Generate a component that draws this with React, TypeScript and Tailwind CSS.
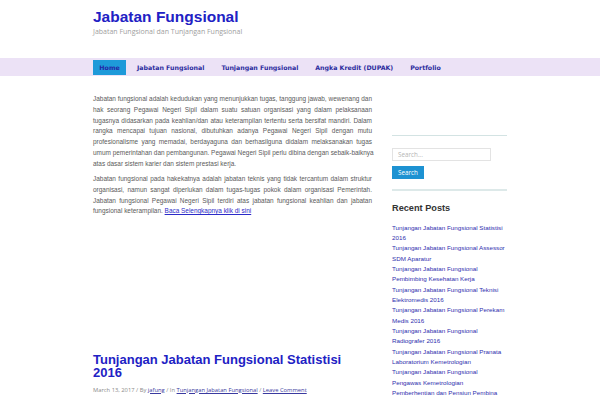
import React from 'react';

const navItems = ['Home', 'Jabatan Fungsional', 'Tunjangan Fungsional', 'Angka Kredit (DUPAK)', 'Portfolio'];

const para1 = [
  'Jabatan fungsional adalah kedudukan yang menunjukkan tugas, tanggung jawab, wewenang dan',
  'hak seorang Pegawai Negeri Sipil dalam suatu satuan organisasi yang dalam pelaksanaan',
  'tugasnya didasarkan pada keahlian/dan atau keterampilan tertentu serta bersifat mandiri. Dalam',
  'rangka mencapai tujuan nasional, dibutuhkan adanya Pegawai Negeri Sipil dengan mutu',
  'profesionalisme yang memadai, berdayaguna dan berhasilguna didalam melaksanakan tugas',
  'umum pemerintahan dan pembangunan. Pegawai Negeri Sipil perlu dibina dengan sebaik-baiknya',
];

const para2 = [
  'Jabatan fungsional pada hakekatnya adalah jabatan teknis yang tidak tercantum dalam struktur',
  'organisasi, namun sangat diperlukan dalam tugas-tugas pokok dalam organisasi Pemerintah.',
  'Jabatan fungsional Pegawai Negeri Sipil terdiri atas jabatan fungsional keahlian dan jabatan',
];

const recentPosts = [
  'Tunjangan Jabatan Fungsional Statistisi 2016',
  'Tunjangan Jabatan Fungsional Assessor SDM Aparatur',
  'Tunjangan Jabatan Fungsional Pembimbing Kesehatan Kerja',
  'Tunjangan Jabatan Fungsional Teknisi Elektromedis 2016',
  'Tunjangan Jabatan Fungsional Perekam Medis 2016',
  'Tunjangan Jabatan Fungsional Radiografer 2016',
  'Tunjangan Jabatan Fungsional Pranata Laboratorium Kemetrologian',
  'Tunjangan Jabatan Fungsional Pengawas Kemetrologian',
  'Pemberhentian dan Pensiun Pembina',
];

// full lines are justified edge to edge, like the source
const Line = ({ children }: { children: React.ReactNode }) => (
  <span className="block whitespace-nowrap text-justify [text-align-last:justify]">{children}</span>
);

export default function App() {
  return (
    <div className="w-[600px] h-[400px] overflow-hidden bg-white font-['Liberation_Sans',Arial,sans-serif]">
      {/* Header */}
      <div className="w-[414px] mx-auto pt-[8px] h-[58px]">
        <h1 className="text-[15.5px] leading-[18px] font-bold text-[#2121c4]">Jabatan Fungsional</h1>
        <p className="mt-[1px] text-[7px] leading-[10px] text-[#a0a0a0] font-['Open_Sans',sans-serif]">
          Jabatan Fungsional dan Tunjangan Fungsional
        </p>
      </div>

      {/* Nav */}
      <div className="bg-[#ece2f6] h-[18px] pt-[2px]">
        <ul className="w-[414px] mx-auto flex gap-[5px]">
          {navItems.map((item, i) => (
            <li
              key={item}
              className={`h-[15px] px-[6px] flex items-center text-[6.25px] font-bold font-['DejaVu_Sans',Verdana,sans-serif] ${
                i === 0 ? 'bg-[#1e9ad9] text-[#2424a6] w-[33px] justify-center' : 'text-[#2d2d9e]'
              }`}
            >
              {item}
            </li>
          ))}
        </ul>
      </div>

      {/* Body */}
      <div className="w-[414px] mx-auto flex gap-[20px] pt-[18px]">
        <main className="w-[279px] shrink-0">
          <div className="text-[6.45px] leading-[10.8px] text-[#5a5a5a]">
            <p className="mb-[4.5px]">
              {para1.map((l) => (
                <Line key={l}>{l}</Line>
              ))}
              <span className="block">atas dasar sistem karier dan sistem prestasi kerja.</span>
            </p>
            <p>
              {para2.map((l) => (
                <Line key={l}>{l}</Line>
              ))}
              <span className="block">
                fungsional keterampilan.{' '}
                <a href="#" className="text-[#2b2bc8] underline">Baca Selengkapnya klik di sini</a>
              </span>
            </p>
          </div>

          <div className="h-[137px]" />

          <h2 className="text-[13px] leading-[12.7px] font-bold text-[#2121c4]">
            Tunjangan Jabatan Fungsional Statistisi 2016
          </h2>
          <p className="mt-[6px] text-[5.8px] text-[#8a8a8a] font-['Open_Sans',sans-serif]">
            March 13, 2017 / By <a href="#" className="underline text-[#3a3aa0]">jafung</a> / In{' '}
            <a href="#" className="underline text-[#3a3aa0]">Tunjangan Jabatan Fungsional</a> /{' '}
            <a href="#" className="underline text-[#3a3aa0]">Leave Comment</a>
          </p>
        </main>

        <aside className="w-[115px] shrink-0 pt-[41px]">
          <div className="h-[1px] bg-[#d3e3e3]" />
          <div className="pt-[12px]">
            <div className="w-[99px] h-[13px] border border-[#e3e3e3] flex items-center px-[5px] text-[6.3px] text-[#b5b5b5] font-['Open_Sans',sans-serif]">
              Search...
            </div>
            <button className="mt-[5px] w-[32px] h-[13px] bg-[#1d92d2] text-white text-[6.3px] font-['Open_Sans',sans-serif] flex items-center justify-center">
              Search
            </button>
          </div>
          <div className="mt-[10px] h-[2px] bg-[#dde9e9]" />
          <h3 className="mt-[11px] text-[9.2px] font-bold text-[#333] leading-[12px]">Recent Posts</h3>
          <ul className="mt-[8.5px] text-[6.26px] leading-[10.35px] text-[#2f2fae]">
            {recentPosts.map((p) => (
              <li key={p}>
                <a href="#">{p}</a>
              </li>
            ))}
          </ul>
        </aside>
      </div>
    </div>
  );
}
